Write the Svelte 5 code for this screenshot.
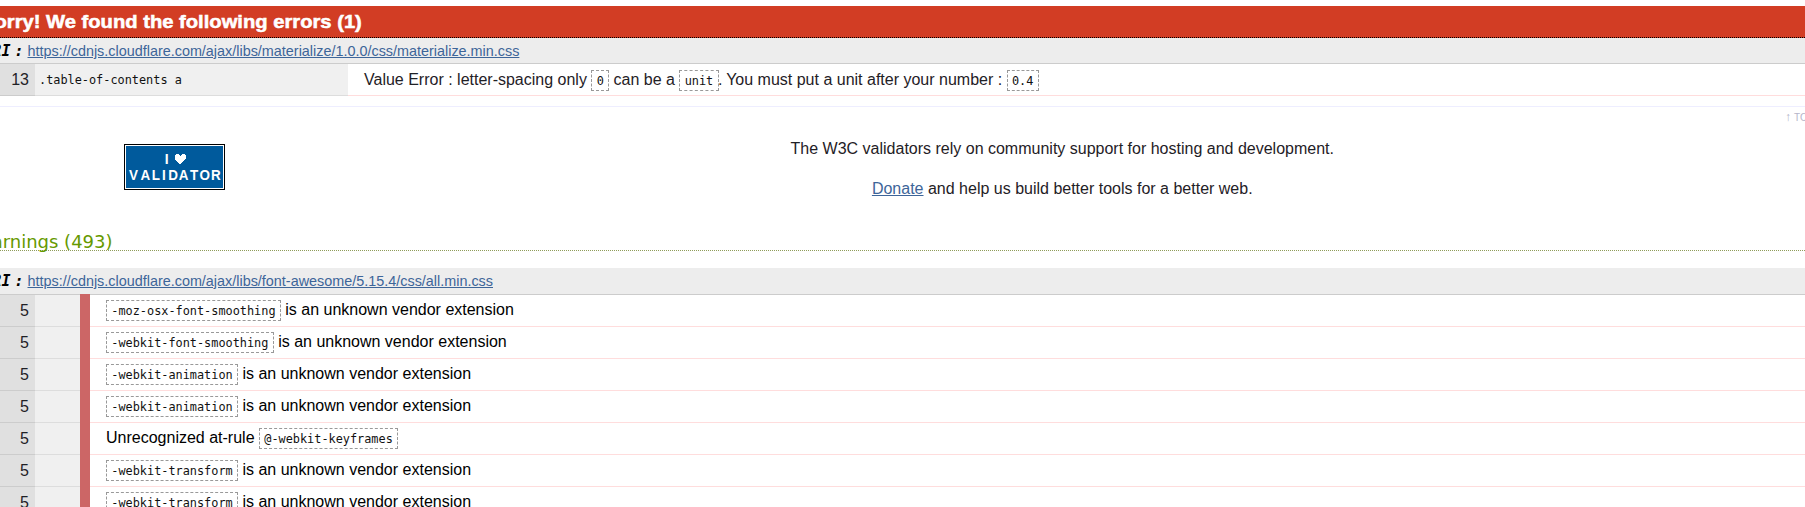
<script>
  const warnings = [
    { code: '-moz-osx-font-smoothing' },
    { code: '-webkit-font-smoothing' },
    { code: '-webkit-animation' },
    { code: '-webkit-animation' },
    { code: '@-webkit-keyframes', rule: true },
    { code: '-webkit-transform' },
    { code: '-webkit-transform' },
  ];
  const badge = [['V', 9.6], ['A', 21.3], ['L', 31.8], ['I', 39.8], ['D', 49], ['A', 59.5], ['T', 70], ['O', 80.8], ['R', 91.8]];
</script>

<main>
  <h2 class="banner"><span>Sorry! We found the following errors (1)</span></h2>
  <div class="uri"><b>URI :</b><a href="#materialize">https://cdnjs.cloudflare.com/ajax/libs/materialize/1.0.0/css/materialize.min.css</a></div>
  <div class="row error">
    <span class="num">13</span>
    <code class="context">.table-of-contents a</code>
    <p class="message">Value Error : letter-spacing only <code>0</code> can be a <code>unit</code><span class="stop">.</span> You must put a unit after your number : <code>0.4</code></p>
  </div>
  <div class="top"><a href="#top"><span>↑</span>TOP</a></div>
  <section class="support">
    <svg width="101" height="46" viewBox="0 0 101 46" shape-rendering="crispEdges">
      <path d="M0 0h101v46H0z" />
      <path fill="#fff" d="M1 1h99v44H1z" />
      <path fill="#005a9c" d="M2 2h97v42H2z" />
      <path fill="#fff" d="M52 10h3v1h1v1h1v-1h1v-1h3v1h1v4h-1v1h-1v1h-1v1h-1v1h-1v1h-2v-1h-1v-1h-1v-1h-1v-1h-1v-5h1z" />
      <text x="42.8" y="20">I</text>
      <text y="36" transform="scale(.96 1)" x={badge.map((b) => b[1] / 0.96).join(' ')}>{badge.map((b) => b[0]).join('')}</text>
    </svg>
    <div class="donate">
      <p>The W3C validators rely on community support for hosting and development.</p>
      <p><a href="#donate">Donate</a> and help us build better tools for a better web.</p>
    </div>
  </section>
  <h3>Warnings (493)</h3>
  <div class="uri second"><b>URI :</b><a href="#fa">https://cdnjs.cloudflare.com/ajax/libs/font-awesome/5.15.4/css/all.min.css</a></div>
  {#each warnings as w}
    <div class="row warning">
      <span class="num">5</span><span class="context"></span><span class="level"></span>
      <p class="message">{#if w.rule}Unrecognized at-rule <code>{w.code}</code>{:else}<code>{w.code}</code> is an unknown vendor extension{/if}</p>
    </div>
  {/each}
</main>

<style>
  :global(body) { background: #fff; overflow: hidden; }
  main { width: 1805px; height: 507px; overflow: hidden; box-sizing: border-box; padding-top: 6px; font: 16px/24px 'Liberation Sans', Arial, sans-serif; color: #1f2126; white-space: nowrap; }
  h2, h3, p { margin: 0; }
  a { color: #3d6599; }
  .banner { height: 31px; border-bottom: 1px dotted #000; background: #d23d24; color: #fff; font: bold 17.6px/33px 'Liberation Sans', Arial, sans-serif; }
  .banner span { display: inline-block; margin-left: -19px; transform: scaleX(1.147); transform-origin: left; -webkit-text-stroke: 0.5px #fff; }
  .uri { display: flex; align-items: center; height: 25px; border-bottom: 1px solid #ccc; background: #ededed; font-size: 14.4px; }
  .uri b { width: 23.5px; margin-right: 4px; display: flex; justify-content: flex-end; font: italic bold 15px 'DejaVu Sans Mono', monospace; word-spacing: -5px; color: #000; }
  .row { display: flex; height: 32px; }
  .num { width: 35px; box-sizing: border-box; padding-right: 6px; text-align: right; line-height: 31px; background: #e0e0e0; border-bottom: 1px solid #ccc; }
  .context { width: 45px; background: #f0f0f0; border-bottom: 1px solid #ddd; }
  .error .context { width: 309px; padding-left: 4px; line-height: 33px; height: 31px; }
  .level { width: 10px; margin-top: -1px; background: #cc6666; }
  .message { flex: 1; box-sizing: border-box; padding-left: 16px; line-height: 31px; border-bottom: 1px solid #fdd; }
  code { font: 11.87px/16px 'DejaVu Sans Mono', monospace; color: #111; }
  .message code { border: 1px dashed #999; padding: 3px 4.3px 2px; }
  .stop { margin: 0 -0.5px 0 -0.5px; }
  .top { margin-top: 10px; height: 22px; border-top: 1px solid #eef; padding-left: 1785px; font-size: 10px; line-height: 20px; }
  .top a { color: #b5b5c9; text-decoration: none; }
  .top span { font-size: 12px; display: inline-block; width: 9px; }
  .support { display: flex; height: 101px; padding: 15px 0 0 124px; box-sizing: border-box; }
  svg { flex: none; }
  text { fill: #fff; font: bold 14px 'Liberation Sans', sans-serif; text-anchor: middle; }
  .donate { flex: none; width: 1674.5px; margin-top: -7px; text-align: center; }
  .donate p { line-height: 24px; margin-bottom: 16px; }
  h3 { height: 20px; border-bottom: 1px dotted #8f9c5a; color: #690; font: 18px/23px 'DejaVu Sans', sans-serif; text-indent: -25px; }
  .second { margin-top: 17px; height: 26px; }
  .second a, .second b { margin-bottom: 1px; }
  .warning { color: #000; }
  .warning .message { line-height: 30px; }
  .warning .num { color: #1f2126; }
</style>
